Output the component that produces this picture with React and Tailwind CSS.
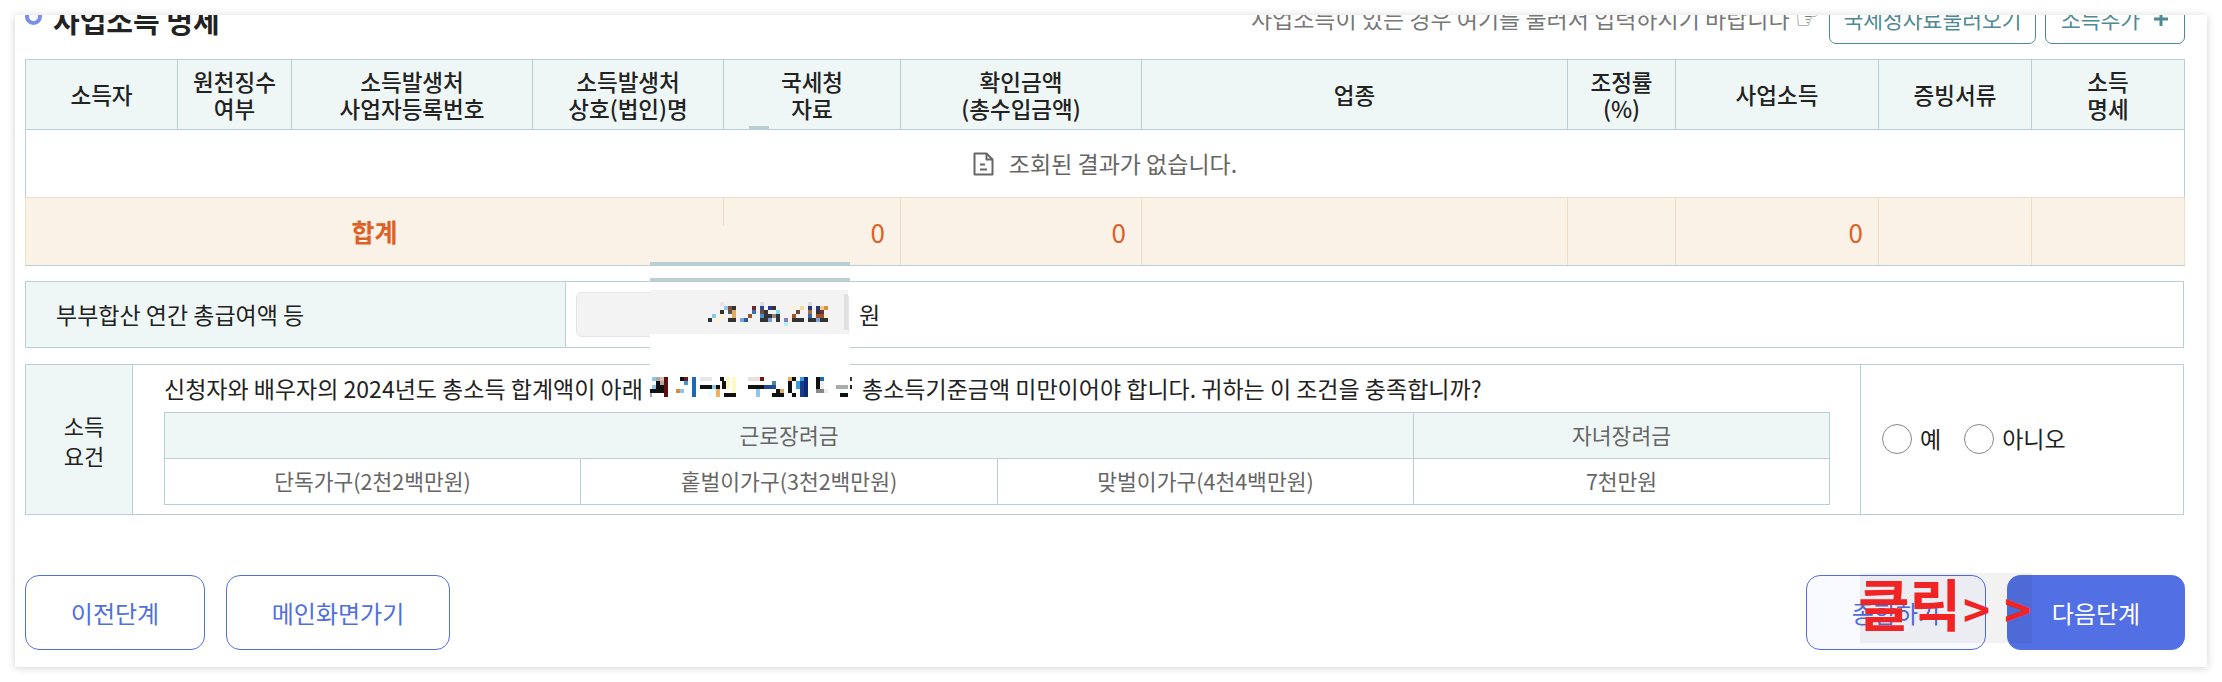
const FONT = "font-['Noto_Sans_CJK_KR','Noto_Sans',sans-serif]";

const widths = [152, 114, 241, 191, 177, 241, 426, 108, 203, 153, 153];

const headers = [
  ["소득자"],
  ["원천징수", "여부"],
  ["소득발생처", "사업자등록번호"],
  ["소득발생처", "상호(법인)명"],
  ["국세청", "자료"],
  ["확인금액", "(총수입금액)"],
  ["업종"],
  ["조정률", "(%)"],
  ["사업소득"],
  ["증빙서류"],
  ["소득", "명세"],
];

const valuePixels = [
  [12, 0, "#efe0e4"], [16, 4, "#8cc8ee"], [20, 4, "#7a4a3a"], [24, 4, "#333"], [12, 8, "#333"], [20, 8, "#555"], [24, 8, "#e8a860"],
  [4, 12, "#8cc8ee"], [12, 12, "#fff2cc"], [24, 12, "#e8a860"], [0, 16, "#333"], [8, 16, "#fff2cc"], [20, 16, "#333"], [24, 16, "#333"], [32, 16, "#7ba4d8"],
  [44, 4, "#6b2a20"], [44, 8, "#3a6fb5"], [40, 12, "#a0522d"], [36, 16, "#2e5a9e"],
  [52, 0, "#ddd"], [52, 4, "#2e4a8e"], [60, 4, "#2a3a8e"], [52, 8, "#6b4a3a"], [56, 8, "#333"], [68, 8, "#8ad8e8"], [52, 12, "#4a90d0"], [56, 12, "#333"], [60, 12, "#333"], [64, 12, "#888"], [68, 12, "#333"],
  [52, 16, "#333"], [56, 16, "#333"], [60, 16, "#7ba4d8"], [68, 16, "#333"], [64, 4, "#333"],
  [76, 16, "#8080c0"], [80, 16, "#fff2cc"], [76, 20, "#b8f0f0"],
  [84, 4, "#fff2cc"], [92, 4, "#f0d8a0"], [88, 8, "#6b4a3a"], [84, 12, "#a0522d"], [84, 16, "#333"], [88, 16, "#333"], [92, 16, "#333"],
  [100, 0, "#ddd"], [100, 4, "#2a3a6e"], [108, 4, "#2a3a6e"], [100, 8, "#a0703a"], [108, 8, "#333"], [100, 12, "#2e6ab0"], [108, 12, "#a0522d"], [100, 16, "#333"], [104, 16, "#333"], [108, 16, "#7ba4d8"],
  [112, 4, "#f0c890"], [116, 4, "#d89040"], [112, 8, "#7a2a30"], [112, 12, "#a0522d"], [116, 12, "#fff2cc"], [112, 16, "#333"], [116, 16, "#333"],
];

const linePixels = [
  [6, 0, 12, 12, "#8cc8ee"], [18, 0, 12, 12, "#aaa"], [30, 0, 12, 12, "#e0c0a0"], [42, 0, 12, 60, "#5a1010"],
  [18, 12, 12, 12, "#111"], [30, 12, 12, 12, "#aaa"], [6, 24, 12, 12, "#8cc8ee"], [18, 24, 24, 12, "#111"], [0, 36, 42, 12, "#111"], [0, 48, 6, 12, "#aaa"],
  [78, 36, 12, 12, "#d89040"], [90, 36, 12, 12, "#8cc8ee"], [90, 0, 12, 12, "#111"], [102, 0, 12, 12, "#6b1a1a"], [102, 12, 12, 12, "#3a9ae0"], [126, 0, 12, 60, "#1a6ab8"],
  [150, 0, 36, 12, "#e8e8e8"], [150, 24, 48, 12, "#111"], [186, 24, 12, 12, "#8cc8ee"], [198, 24, 12, 12, "#111"], [210, 0, 12, 12, "#111"], [216, 12, 12, 24, "#111"], [228, 0, 12, 36, "#fff8c0"],
  [198, 36, 12, 24, "#f0b060"], [222, 48, 36, 12, "#111"], [246, 0, 12, 48, "#fff8c0"], [174, 36, 12, 24, "#eaffff"],
  [294, 0, 36, 12, "#e8e0e0"], [330, 0, 12, 12, "#6b1a1a"], [294, 24, 54, 12, "#111"], [318, 36, 12, 24, "#8cc8ee"], [342, 24, 24, 12, "#1a4a9e"], [366, 12, 12, 12, "#4a8a8a"], [366, 24, 12, 12, "#2a4a8e"],
  [366, 48, 12, 12, "#111"], [378, 36, 12, 24, "#111"], [390, 36, 12, 12, "#e0b060"], [390, 48, 12, 12, "#111"],
  [414, 0, 12, 12, "#f0b060"], [414, 12, 12, 36, "#111"], [426, 0, 12, 12, "#111"], [438, 12, 12, 24, "#3a9ae0"], [426, 48, 12, 12, "#111"], [450, 0, 24, 12, "#3a9ae0"], [450, 12, 12, 48, "#1a3a8e"], [462, 0, 12, 60, "#0a2a7a"],
  [498, 0, 12, 36, "#111"], [510, 0, 12, 12, "#1a6ab8"], [510, 12, 12, 24, "#eee"], [498, 36, 24, 12, "#888"], [522, 36, 12, 12, "#eee"],
  [558, 24, 36, 12, "#aaa"], [600, 0, 6, 12, "#333"], [600, 24, 6, 12, "#222"], [570, 36, 12, 24, "#eaffff"], [570, 48, 24, 12, "#111"],
];

function SectionTitle() {
  return (
    <div className="flex h-[29px] items-end justify-between mb-[15px]">
      <div className="flex items-center gap-[11px] h-[44px] mb-[1px]">
        <span className="w-[17px] h-[17px] rounded-full border-[4px] border-[#7b8fe8] bg-white mb-[10px]" />
        <span className="text-[29px] font-bold text-[#222] leading-[40px] mb-[3px] whitespace-nowrap">사업소득 명세</span>
      </div>
      <div className="flex items-end">
        <span className="text-[23px] text-[#777] leading-[30px] mb-[11px] whitespace-nowrap">
          사업소득이 있는 경우 여기를 불러서 입력하시기 바랍니다 <span className="font-['DejaVu_Sans'] text-[27px] leading-none">☞</span>
        </span>
        <button className="ml-[10px] w-[207px] h-[50px] rounded-[7px] border border-[#4f8a93] bg-white text-[21.5px] text-[#4f8a93] leading-none">국세청자료불러오기</button>
        <button className="ml-[9px] w-[140px] h-[50px] rounded-[7px] border border-[#4f8a93] bg-white text-[21.5px] text-[#4f8a93] flex items-center justify-center gap-[13px] leading-none">
          <span>소득추가</span>
          <svg width="16" height="16" viewBox="0 0 16 16" fill="none" stroke="#4f8a93" strokeWidth="3"><path d="M8 1v14M1 8h14" /></svg>
        </button>
      </div>
    </div>
  );
}

function IncomeTable() {
  const thCls = "border border-[#b9cfd3] bg-[#eff7f6] text-[22.5px] font-medium text-[#222] leading-[27px] text-center align-middle p-0";
  const tdTotal = "border border-[#f0dcc9] border-b-[#b9cfd3] bg-[#faf1e7] text-[26px] text-[#dc6128] text-right pr-[15px] align-middle";
  return (
    <table className="table-fixed border-collapse w-[2159px] border border-[#b9cfd3]">
      <colgroup>
        {widths.map((w, i) => <col key={i} style={{ width: w }} />)}
      </colgroup>
      <thead>
        <tr className="h-[70px]">
          {headers.map((h, i) => (
            <th key={i} className={thCls}>
              {h.map((l) => <div key={l}>{l}</div>)}
            </th>
          ))}
        </tr>
      </thead>
      <tbody>
        <tr className="h-[68px]">
          <td colSpan={11} className="text-center align-middle border border-[#b9cfd3] border-b-[#f0dcc9]">
            <span className="inline-flex items-center gap-[15px] text-[23px] text-[#666]">
              <svg width="21" height="24" viewBox="0 0 21 24" fill="none" stroke="#666" strokeWidth="2" strokeLinejoin="round">
                <path d="M1.5 1.5h12l6 6v15h-18z" />
                <path d="M13.5 1.5v6h6" />
                <path d="M7 12.5h5M7 17.5h7" />
              </svg>
              조회된 결과가 없습니다.
            </span>
          </td>
        </tr>
        <tr className="h-[68px]">
          <td colSpan={4} className="border border-[#f0dcc9] border-b-[#b9cfd3] bg-[#faf1e7] text-center text-[25px] font-bold text-[#dc6128] align-middle">합계</td>
          <td className={tdTotal}>0</td>
          <td className={tdTotal}>0</td>
          <td className={tdTotal} />
          <td className={tdTotal} />
          <td className={tdTotal}>0</td>
          <td className={tdTotal} />
          <td className={tdTotal} />
        </tr>
      </tbody>
    </table>
  );
}

function SpouseRow() {
  return (
    <div className="mt-[15px] flex h-[67px] w-[2159px] border border-[#b9cfd3]">
      <div className="w-[540px] bg-[#eff7f6] border-r border-[#b9cfd3] flex items-center pl-[30px] text-[23px] text-[#222]">부부합산 연간 총급여액 등</div>
      <div className="flex items-center pl-[10px]">
        <div className="w-[273px] h-[45px] rounded-[6px] bg-[#f3f3f3] border border-[#e4e4e4]" />
        <span className="ml-[10px] text-[23px] text-[#222]">원</span>
      </div>
    </div>
  );
}

function Requirement() {
  const thc = "border border-[#b9cfd3] bg-[#eff7f6] text-[21.5px] font-normal text-[#666] text-center p-0";
  const tdc = "border border-[#b9cfd3] text-[21.5px] text-[#666] text-center p-0";
  return (
    <div className="mt-[16px] flex h-[151px] w-[2159px] border border-[#b9cfd3]">
      <div className="w-[107px] bg-[#eff7f6] border-r border-[#b9cfd3] flex flex-col items-center justify-center pl-[10px] text-[22px] leading-[30px] text-[#222]">
        <span>소득</span>
        <span>요건</span>
      </div>
      <div className="w-[1728px] pl-[31px] border-r border-[#b9cfd3]">
        <div className="h-[47px] flex items-center text-[23px] text-[#222] whitespace-nowrap">
          <span className="w-[698px]">신청자와 배우자의 2024년도 총소득 합계액이 아래</span>
          <span>총소득기준금액 미만이어야 합니다. 귀하는 이 조건을 충족합니까?</span>
        </div>
        <table className="table-fixed border-collapse w-[1665px] border border-[#b9cfd3]">
          <colgroup>
            <col className="w-[416px]" />
            <col className="w-[417px]" />
            <col className="w-[416px]" />
            <col className="w-[416px]" />
          </colgroup>
          <tbody>
            <tr className="h-[46px]">
              <td colSpan={3} className={thc}>근로장려금</td>
              <td className={thc}>자녀장려금</td>
            </tr>
            <tr className="h-[46px]">
              <td className={tdc}>단독가구(2천2백만원)</td>
              <td className={tdc}>홑벌이가구(3천2백만원)</td>
              <td className={tdc}>맞벌이가구(4천4백만원)</td>
              <td className={tdc}>7천만원</td>
            </tr>
          </tbody>
        </table>
      </div>
      <div className="flex items-center pl-[21px] pb-[2px] text-[23px] text-[#222]">
        <span className="w-[30px] h-[30px] rounded-full border border-[#888] bg-white" />
        <span className="ml-[8px]">예</span>
        <span className="ml-[23px] w-[30px] h-[30px] rounded-full border border-[#888] bg-white" />
        <span className="ml-[8px]">아니오</span>
      </div>
    </div>
  );
}

function Footer() {
  const outline = "h-[75px] rounded-[14px] border border-[#4f6fe0] text-[#4f6fe0] text-[24px] flex items-center justify-center";
  return (
    <div className="mt-[60px] flex justify-between w-[2160px]">
      <div className="flex gap-[21px]">
        <button className={`${outline} w-[180px] bg-white`}>이전단계</button>
        <button className={`${outline} w-[224px] bg-white`}>메인화면가기</button>
      </div>
      <div className="flex gap-[21px]">
        <button className={`${outline} w-[180px] bg-[#f9faff]`}>종합하기</button>
        <button className="w-[178px] h-[75px] rounded-[14px] bg-[#5270e3] text-white text-[24px] flex items-center justify-center">다음단계</button>
      </div>
    </div>
  );
}

function MaskPatch() {
  return (
    <div className="absolute left-[650px] top-[226px] w-[200px] flex flex-col">
      <div className="h-[36px] bg-[#faf1e7]" />
      <div className="h-[4px] bg-[#b9cfd3]" />
      <div className="h-[12px] bg-white" />
      <div className="h-[4px] bg-[#b9cfd3]" />
      <div className="h-[8px] bg-white" />
      <div className="h-[44px] w-[198px] bg-[#f3f3f3] relative">
        <svg className="absolute left-[58px] top-[12px]" width="122" height="24" viewBox="0 0 122 24">
          {valuePixels.map(([x, y, c], i) => <rect key={i} x={x} y={y} width="4" height="4" fill={c} />)}
        </svg>
        <div className="absolute right-0 top-[4px] w-[4px] h-[36px] bg-[#e0e0e2]" />
      </div>
      <div className="h-[43px] bg-white" />
      <div className="h-[33px] w-[206px] bg-white">
        <svg width="205" height="20" viewBox="0 0 615 60" className="overflow-visible">
          {linePixels.map(([x, y, w, h, c], i) => <rect key={i} x={x} y={y} width={w} height={h} fill={c} />)}
        </svg>
      </div>
    </div>
  );
}

function ClickNote() {
  return (
    <div className="absolute left-[1860px] top-[573px] w-[172px] h-[70px] bg-black/5 flex items-center whitespace-nowrap font-bold text-[#f02424]">
      <span className="-ml-[2px] mb-[12px] text-[56px] leading-none">클릭</span>
      <span className="ml-[2px] text-[46px] leading-none">&gt;</span>
      <span className="ml-[14px] text-[46px] leading-none">&gt;</span>
    </div>
  );
}

export default function App() {
  return (
    <div className={`relative w-[2222px] h-[682px] bg-white overflow-hidden ${FONT}`}>
      <div className="absolute left-[15px] top-[15px] w-[2192px] h-[652px] bg-white overflow-hidden shadow-[0_1px_8px_rgba(0,0,0,0.18)] pl-[10px]">
        <div className="w-[2160px]">
          <SectionTitle />
          <IncomeTable />
          <SpouseRow />
          <Requirement />
          <Footer />
        </div>
      </div>
      <MaskPatch />
      <ClickNote />
      <div className="absolute left-[749px] top-[126px] w-[20px] h-[3px] bg-[#b9cfd3]" />
    </div>
  );
}
